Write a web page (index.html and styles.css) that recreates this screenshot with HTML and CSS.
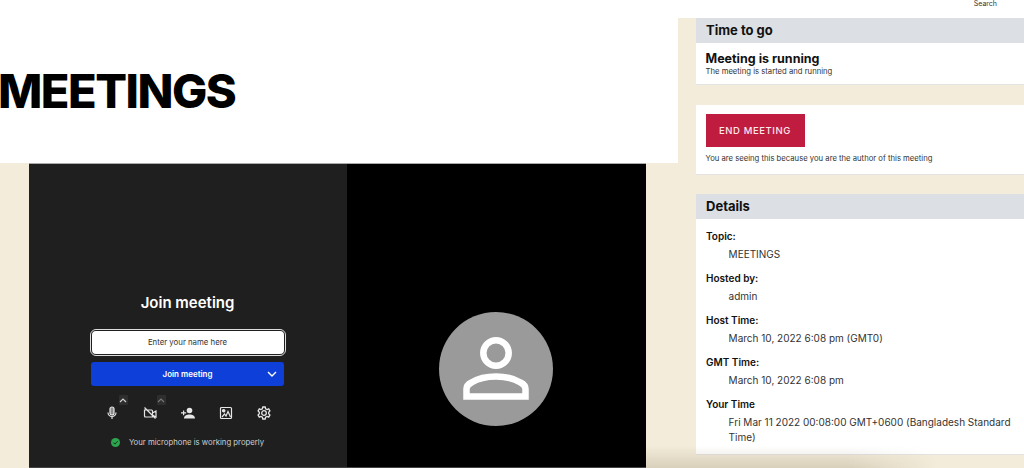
FILE: index.html
```html
<!DOCTYPE html>
<html lang="en">
<head>
    <meta charset="UTF-8">
    <meta name="viewport" content="width=device-width, initial-scale=1.0">
    <title>Meetings</title>
    <link rel="stylesheet" href="styles.css">
</head>
<body>

    <header class="topbar">
        <span class="search-link">Search</span>
    </header>

    <div class="page">
        <main class="main-col">
            <section class="hero">
                <h1>MEETINGS</h1>
            </section>

            <!-- ZOOM EMBED -->
            <section class="video-wrap">
                <div class="join-panel">
                    <h2>Join meeting</h2>
                    <div class="name-input">Enter your name here</div>
                    <div class="join-btn">
                        <span>Join meeting</span>
                        <svg class="join-caret" width="10" height="6" viewBox="0 0 10 6"><path d="M1 1l4 4 4-4" fill="none" stroke="#fff" stroke-width="1.4"/></svg>
                    </div>

                    <div class="tools">
                        <div class="tool">
                            <span class="tool-arrow"><svg width="8" height="5" viewBox="0 0 8 5"><path d="M1 4l3-3 3 3" fill="none" stroke="#cfcfcf" stroke-width="1.2"/></svg></span>
                            <svg width="14" height="14" viewBox="0 0 14 14" fill="none" stroke="#e6e6e6" stroke-width="1.2">
                                <rect x="5" y="1" width="4" height="8" rx="2" fill="#8a8a8a"/>
                                <path d="M3 6.500a4 4 0 0 0 8 0M7 10.500V13"/>
                            </svg>
                        </div>
                        <div class="tool">
                            <span class="tool-arrow"><svg width="8" height="5" viewBox="0 0 8 5"><path d="M1 4l3-3 3 3" fill="none" stroke="#777" stroke-width="1.2"/></svg></span>
                            <svg width="14" height="14" viewBox="0 0 14 14" fill="none" stroke="#e6e6e6" stroke-width="1.2">
                                <path d="M1.500 4h7a1 1 0 0 1 1 1v6h-7a1 1 0 0 1-1-1zM9.500 7l3.500-2v6l-3.500-2M1.500 1.500l11 11"/>
                            </svg>
                        </div>
                        <div class="tool">
                            <svg width="14" height="14" viewBox="0 0 14 14" fill="#e6e6e6">
                                <circle cx="8.500" cy="4.500" r="2.800"/>
                                <path d="M3 12.500c0-2.800 2.500-4 5.500-4s5.500 1.200 5.500 4zM0 6.300h2V4.500h1.200v1.800h2v1.200h-2v1.800H2V7.500H0z"/>
                            </svg>
                        </div>
                        <div class="tool">
                            <svg width="14" height="14" viewBox="0 0 14 14" fill="none" stroke="#e6e6e6" stroke-width="1.200">
                                <rect x="1.500" y="1.500" width="11" height="11" rx="1"/>
                                <circle cx="4.700" cy="4.700" r="1.200" fill="#e6e6e6"/>
                                <path d="M3 11l2.500-3 1.500 2 2-4.500L11.500 11"/>
                            </svg>
                        </div>
                        <div class="tool">
                            <svg width="14" height="14" viewBox="0 0 14 14" fill="none" stroke="#e6e6e6" stroke-width="1.300">
                                <circle cx="7" cy="7" r="2.300"/>
                                <path d="M5.800 1h2.400l.4 1.700 1.500.8 1.600-.6 1.200 2.100-1.200 1.200v1.600l1.200 1.200-1.200 2.100-1.600-.6-1.500.8-.4 1.700H5.800l-.4-1.700-1.500-.8-1.600.6L1.100 9l1.200-1.200V6.200L1.100 5l1.200-2.100 1.600.6 1.500-.8z"/>
                            </svg>
                        </div>
                    </div>

                    <p class="mic-status">
                        <svg width="9" height="9" viewBox="0 0 9 9"><circle cx="4.500" cy="4.500" r="4.500" fill="#2da44e"/><path d="M2.400 4.600l1.500 1.500 2.800-2.900" fill="none" stroke="#10301a" stroke-width="1"/></svg>
                        <span>Your microphone is working properly</span>
                    </p>
                </div>

                <div class="self-view">
                    <div class="avatar">
                        <svg width="66" height="64" viewBox="0 0 66 64" fill="none" stroke="#fff" stroke-width="6.500">
                            <circle cx="33" cy="16" r="12.700"/>
                            <path d="M3.500 59.500V52c0-3 2-5 5-6.500C15 41.500 24 39.500 33 39.500s18 2 24.500 6c3 1.500 5 3.500 5 6.500v7.500z"/>
                        </svg>
                    </div>
                </div>
            </section>
        </main>

        <aside class="sidebar">
            <section class="card card-time">
                <h3 class="card-title">Time to go</h3>
                <div class="card-body">
                    <h4>Meeting is running</h4>
                    <p class="small-text">The meeting is started and running</p>
                </div>
            </section>

            <section class="card card-end">
                <button class="end-btn" type="button">END MEETING</button>
                <p class="small-text">You are seeing this because you are the author of this meeting</p>
            </section>

            <section class="card card-details">
                <h3 class="card-title">Details</h3>
                <dl class="details">
                    <dt>Topic:</dt>
                    <dd>MEETINGS</dd>
                    <dt>Hosted by:</dt>
                    <dd>admin</dd>
                    <dt>Host Time:</dt>
                    <dd>March 10, 2022 6:08 pm (GMT0)</dd>
                    <dt>GMT Time:</dt>
                    <dd>March 10, 2022 6:08 pm</dd>
                    <dt>Your Time</dt>
                    <dd>Fri Mar 11 2022 00:08:00 GMT+0600 (Bangladesh Standard Time)</dd>
                </dl>
            </section>
        </aside>
    </div>

    <div class="bottom-fade"></div>

</body>
</html>
```

FILE: styles.css
```css
html, body {
    height: 468px;
    overflow: hidden;
}

body {
    font-family: Inter, "Liberation Sans", sans-serif;
    background-color: #f3ecda;
    color: #1d1f21;
    margin: 0;
}

.topbar {
    height: 18px;
    background-color: #ffffff;
    display: flex;
    justify-content: flex-end;
    padding-right: 27px;
}

.search-link {
    font-size: 7px;
    line-height: 8px;
    color: #333;
}

.page {
    display: flex;
    height: 450px;
}

.main-col {
    width: 678px;
    flex-shrink: 0;
}

.hero {
    height: 145px;
    background-color: #ffffff;
    display: flex;
    align-items: flex-start;
}

h1 {
    margin: 48px 0 0 -2px;
    font-size: 47px;
    line-height: 50px;
    font-weight: 800;
    letter-spacing: -1.500px;
    color: #000;
}

/* video area */
.video-wrap {
    display: flex;
    margin-left: 28.500px;
    width: 617.500px;
    height: 305px;
    background-color: #000;
    border-top: 1px solid #aaa;
    border-bottom: 1px solid #444;
    box-sizing: border-box;
}

.join-panel {
    width: 318px;
    background-color: #1f1f1f;
    color: #fff;
    display: flex;
    flex-direction: column;
    align-items: center;
    box-sizing: border-box;
    padding-top: 130px;
}

.join-panel h2 {
    margin: 0;
    font-size: 15px;
    line-height: 18px;
    font-weight: 600;
}

.name-input {
    margin-top: 17px;
    width: 196px;
    height: 27px;
    box-sizing: border-box;
    background-color: #fff;
    border: 2px solid #1f1f1f;
    outline: 1px solid #ddd;
    outline-offset: -1px;
    border-radius: 6px;
    color: #333;
    font-size: 7.800px;
    line-height: 23px;
    text-align: center;
}

.join-btn {
    margin-top: 6px;
    width: 193px;
    height: 24px;
    background-color: #0e3fd8;
    border-radius: 3px;
    font-size: 8px;
    font-weight: 600;
    line-height: 24px;
    text-align: center;
    position: relative;
}

.join-caret {
    position: absolute;
    right: 7px;
    top: 9px;
}

.tools {
    margin-top: 18px;
    display: flex;
    gap: 24px;
}

.tool {
    width: 14px;
    height: 14px;
    position: relative;
}

.tool-arrow {
    position: absolute;
    left: 14px;
    top: -9px;
    width: 9px;
    height: 10px;
    background-color: #2e2e2e;
    border-radius: 1px;
    display: flex;
    align-items: center;
    justify-content: center;
}

.mic-status {
    margin: 18px 0 0;
    display: flex;
    align-items: center;
    gap: 9px;
    font-size: 7.750px;
    line-height: 12px;
    color: #cfcfcf;
}

.self-view {
    flex: 1;
    display: flex;
    justify-content: center;
    padding-top: 148px;
}

.avatar {
    width: 114px;
    height: 114px;
    border-radius: 50%;
    background-color: #9a9a9a;
    display: flex;
    justify-content: center;
    padding-top: 25px;
    box-sizing: border-box;
}

/* sidebar */
.sidebar {
    flex: 1;
    padding-left: 18px;
    display: flex;
    flex-direction: column;
    gap: 20px;
}

.card {
    background-color: #fff;
    border-bottom: 1px solid #e3e3e3;
}

.card-title {
    margin: 0;
    background-color: #dcdfe3;
    height: 25px;
    padding: 0 10px;
    font-size: 13px;
    line-height: 25px;
    font-weight: 700;
    color: #111;
}

.card-body {
    padding: 8px 9.500px 7px;
}

.card-body h4 {
    margin: 0;
    font-size: 12.500px;
    line-height: 16px;
    font-weight: 700;
    color: #111;
}

.small-text {
    margin: 0;
    font-size: 7.700px;
    line-height: 10px;
    color: #333;
}

.card-end {
    height: 70px;
    box-sizing: border-box;
    padding: 9px 9.500px 0;
}

.end-btn {
    display: block;
    width: 99px;
    height: 33px;
    padding: 0;
    background-color: #bf1c40;
    color: #fbe8ec;
    border: none;
    font-family: inherit;
    font-size: 9.500px;
    font-weight: 500;
    letter-spacing: 0.600px;
    margin-bottom: 7px;
}

.card-details {
    margin-top: -1px;
    height: 261px;
    box-sizing: border-box;
}

.details {
    margin: 0;
    padding: 10px 10px 0;
    font-size: 10px;
    line-height: 15px;
}

.details dt {
    font-weight: 600;
    color: #111;
}

.details dd {
    margin: 3px 0 9px 22.600px;
    color: #333;
}

.bottom-fade {
    position: absolute;
    left: 646px;
    top: 446px;
    width: 290px;
    height: 22px;
    background: linear-gradient(180deg, rgba(120, 105, 70, 0), rgba(120, 105, 70, 0.21));
    -webkit-mask-image: linear-gradient(90deg, #000 70%, transparent);
    mask-image: linear-gradient(90deg, #000 70%, transparent);
}
```
